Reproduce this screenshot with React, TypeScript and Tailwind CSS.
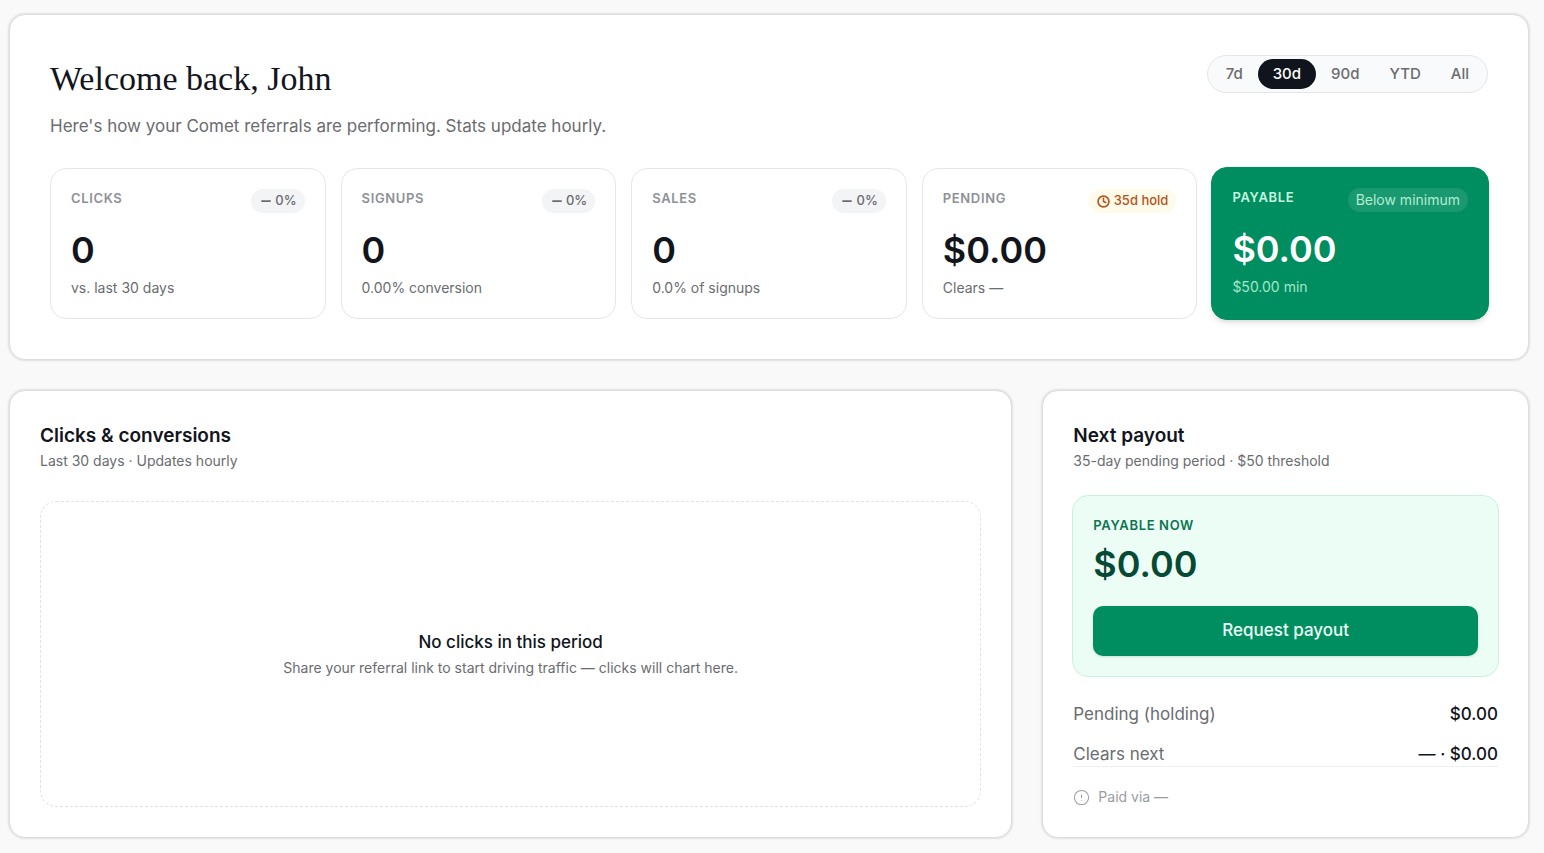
import React, { useState } from "react";
import { CircleAlert, Clock, Minus } from "lucide-react";

interface StatCardProps {
  label: string;
  value: string;
  note: string;
  badge: React.ReactNode;
}

const ranges = ["7d", "30d", "90d", "YTD", "All"];

const panel = "rounded-2xl border border-[#dedede] bg-white shadow-[0_0_2px_1px_rgba(0,0,0,0.1)]";

const ZeroBadge = () => (
  <span className="flex h-6 items-center gap-0.5 rounded-full bg-[#f3f4f6] px-2 text-[13px] font-medium text-[#6a6c70]">
    <Minus size={14} strokeWidth={3} />
    0%
  </span>
);

const HoldBadge = () => (
  <span className="flex h-6 items-center gap-1 rounded-full bg-[#fffbeb] px-2 text-[13px] font-medium text-[#b4531a]">
    <Clock size={13} strokeWidth={3} />
    35d hold
  </span>
);

const StatCard = ({ label, value, note, badge }: StatCardProps) => {
  return (
    <div className="rounded-2xl border border-[#e4e6e8] p-5">
      <div className="flex h-6 items-start justify-between">
        <p className="text-[13px] leading-[18px] font-semibold tracking-wider text-[#8e9196]">{label}</p>
        {badge}
      </div>
      <p className="mt-[17px] text-4xl leading-10 font-semibold text-[#12151c]">{value}</p>
      <p className="mt-2 text-sm leading-5 text-[#6a6c70]">{note}</p>
    </div>
  );
};

const PayableCard = () => {
  // slightly bigger than its neighbours so it stands out in the row
  return (
    <div className="-m-px rounded-2xl border border-[#008e60] bg-[#008e60] p-5 shadow-md">
      <div className="flex h-6 items-start justify-between">
        <p className="text-[13px] leading-[18px] font-semibold tracking-wider text-[#c5f5de]">PAYABLE</p>
        <span className="flex h-6 items-center rounded-full bg-white/10 px-2 text-sm whitespace-nowrap text-[#b3ecd2]">
          Below minimum
        </span>
      </div>
      <p className="mt-[17px] text-4xl leading-10 font-semibold text-white">$0.00</p>
      <p className="mt-2 text-sm leading-5 text-[#a2e8c9]">$50.00 min</p>
    </div>
  );
};

const Overview = () => {
  const [range, setRange] = useState("30d");

  return (
    <section className={`${panel} p-10`}>
      <div className="flex items-start justify-between">
        <div>
          <h1 className="font-['Liberation_Serif',serif] text-[34px] leading-[48px] text-[#12151c]">Welcome back, John</h1>
          <p className="mt-2 text-[17px] leading-[30px] text-[#6a6c70]">
            Here's how your Comet referrals are performing. Stats update hourly.
          </p>
        </div>
        <div className="flex rounded-full border border-[#e4e6e8] bg-[#f9fafb] p-[3px]">
          {ranges.map((r) => (
            <button
              key={r}
              onClick={() => setRange(r)}
              className={
                r === range
                  ? "h-[30px] rounded-full bg-[#10141d] px-[15px] text-[15px] font-medium text-white"
                  : "h-[30px] rounded-full px-[15px] text-[15px] font-medium text-[#6a6c70]"
              }
            >
              {r}
            </button>
          ))}
        </div>
      </div>
      <div className="mt-[27px] grid grid-cols-5 gap-[15px]">
        <StatCard label="CLICKS" value="0" note="vs. last 30 days" badge={<ZeroBadge />} />
        <StatCard label="SIGNUPS" value="0" note="0.00% conversion" badge={<ZeroBadge />} />
        <StatCard label="SALES" value="0" note="0.0% of signups" badge={<ZeroBadge />} />
        <StatCard label="PENDING" value="$0.00" note="Clears —" badge={<HoldBadge />} />
        <PayableCard />
      </div>
    </section>
  );
};

const ClicksPanel = () => {
  return (
    <section className={`${panel} col-span-2 flex flex-col p-[30px]`}>
      <h2 className="text-[19px] leading-[30px] font-semibold text-[#12151c]">Clicks &amp; conversions</h2>
      <p className="text-sm leading-5 text-[#6a6c70]">Last 30 days · Updates hourly</p>
      <div className="mt-[30px] flex flex-1 flex-col items-center justify-center rounded-2xl border border-dashed border-[#e0e2e4]">
        <p className="text-[17px] leading-7 font-medium text-[#12151c]">No clicks in this period</p>
        <p className="text-sm leading-6 text-[#6a6c70]">
          Share your referral link to start driving traffic — clicks will chart here.
        </p>
      </div>
    </section>
  );
};

const PayoutPanel = () => {
  return (
    <section className={`${panel} p-[30px]`}>
      <h2 className="text-[19px] leading-[30px] font-semibold text-[#12151c]">Next payout</h2>
      <p className="text-sm leading-5 text-[#6a6c70]">35-day pending period · $50 threshold</p>
      <div className="-mx-px mt-6 rounded-2xl border border-[#c8f2de] bg-[#ecfdf6] p-5">
        <p className="text-[13px] leading-[18px] font-semibold tracking-wider text-[#0a7551]">PAYABLE NOW</p>
        <p className="mt-1.5 text-4xl leading-[48px] font-semibold text-[#064934]">$0.00</p>
        <button className="mt-[18px] h-[50px] w-full rounded-[10px] bg-[#008e60] text-[17px] font-medium text-[#ecfdf6] shadow-sm">
          Request payout
        </button>
      </div>
      <dl className="mt-[25px] flex flex-col gap-4 border-b border-[#eef0f1] text-[17px] leading-6">
        <div className="flex justify-between">
          <dt className="text-[#6a6c70]">Pending (holding)</dt>
          <dd className="font-medium text-[#12151c]">$0.00</dd>
        </div>
        <div className="flex justify-between">
          <dt className="text-[#6a6c70]">Clears next</dt>
          <dd className="font-medium text-[#12151c]">— · $0.00</dd>
        </div>
      </dl>
      <p className="mt-5 flex items-center gap-2 text-sm leading-5 text-[#9a9da1]">
        <CircleAlert size={17} strokeWidth={1.5} />
        Paid via —
      </p>
    </section>
  );
};

const App = () => {
  return (
    <main className="flex min-h-screen flex-col gap-[30px] bg-[#f9f9f9] pt-3.5 pr-[15px] pb-[15px] pl-[9px] font-['Inter',sans-serif]">
      <Overview />
      <div className="grid flex-1 grid-cols-3 gap-[30px]">
        <ClicksPanel />
        <PayoutPanel />
      </div>
    </main>
  );
};

export default App;
